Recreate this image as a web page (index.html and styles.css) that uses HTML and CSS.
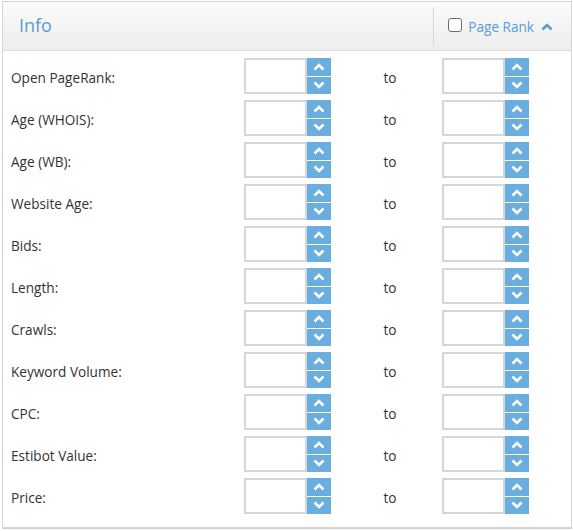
FILE: index.html
```html
<html>

<head>
    <link rel="stylesheet" href="styles.css">
</head>

<body>
    <div class="panel">
        <div class="panel-heading">
            <div class="panel-title">Info</div>
            <div class="panel-tools">
                <label class="rank-toggle"><input type="checkbox"> Page Rank</label>
                <svg class="collapse-icon" width="12" height="8" viewBox="0 0 12 8">
                    <path d="M1.5 6.5 L6 2 L10.5 6.5" fill="none" stroke="#5a9bd5" stroke-width="2.6" />
                </svg>
            </div>
        </div>

        <div class="panel-body" id="filters"></div>
    </div>

    <script>
        var fields = ["Open PageRank:", "Age (WHOIS):", "Age (WB):", "Website Age:", "Bids:", "Length:",
            "Crawls:", "Keyword Volume:", "CPC:", "Estibot Value:", "Price:"];

        var up = '<svg width="12" height="8" viewBox="0 0 12 8"><path d="M1.5 6.5 L6 2 L10.5 6.5" fill="none" stroke="#fff" stroke-width="2.6"/></svg>';
        var down = '<svg width="12" height="8" viewBox="0 0 12 8"><path d="M1.5 1.5 L6 6 L10.5 1.5" fill="none" stroke="#fff" stroke-width="2.6"/></svg>';

        function spinner() {
            return '<div class="spinner"><input type="text">' +
                '<div class="spin-buttons"><button>' + up + '</button><button>' + down + '</button></div></div>';
        }

        var html = "";
        fields.forEach(function (name) {
            html += '<div class="filter-label">' + name + '</div>' + spinner() +
                '<div class="filter-to">to</div>' + spinner();
        });
        document.getElementById("filters").innerHTML = html;
    </script>
</body>

</html>
```

FILE: styles.css
```css
body {
    font-family: 'Open Sans', 'Liberation Sans', sans-serif;
    margin: 0;
    padding: 1px 0 0 2px;
    background-color: #fff;
}

.panel {
    width: 568px;
    border: 1px solid #d4d4d4;
    box-shadow: 0 1px 0 #cfcfcf;
    background-color: #fff;
}

.panel-heading {
    display: flex;
    justify-content: space-between;
    align-items: center;
    height: 48px;
    border-bottom: 1px solid #dcdcdc;
    background: linear-gradient(to bottom, #fbfbfb, #ededed);
}

.panel-title {
    padding-left: 16px;
    font-size: 18px;
    color: #5a9bd5;
    margin-top: -2px;
}

.panel-tools {
    display: flex;
    align-items: center;
    height: 39px;
    border-left: 1px solid #d8d8d8;
    padding: 0 18px 0 14px;
}

.rank-toggle {
    display: flex;
    align-items: center;
    font-size: 13.6px;
    color: #5a9bd5;
}

.rank-toggle input {
    appearance: none;
    width: 14px;
    height: 14px;
    margin: 0 6px 2px 0;
    border: 1px solid #6d6d6d;
    border-radius: 3px;
    background-color: #fff;
}

.collapse-icon {
    margin-left: 7px;
    margin-top: 2px;
}

.panel-body {
    display: grid;
    grid-template-columns: 233px 87px 111px 87px;
    grid-auto-rows: 36px;
    row-gap: 6px;
    align-items: center;
    padding: 7px 0 13px 8px;
    font-size: 13.6px;
    color: #333;
}

.filter-label {
    margin-top: 3px;
}

.filter-to {
    text-align: center;
    padding-left: 7px;
    margin-top: 3px;
}

.spinner {
    display: flex;
    height: 36px;
}

.spinner input {
    width: 63px;
    height: 36px;
    box-sizing: border-box;
    border: 2px solid #d6d6d6;
    margin: 0;
    padding: 0 4px;
    outline: none;
}

.spin-buttons {
    display: flex;
    flex-direction: column;
    gap: 1px;
    width: 24px;
}

.spin-buttons button {
    flex: 1;
    border: none;
    padding: 0;
    margin: 0;
    background-color: #6aaee0;
    display: flex;
    align-items: center;
    justify-content: center;
    cursor: pointer;
}
```
